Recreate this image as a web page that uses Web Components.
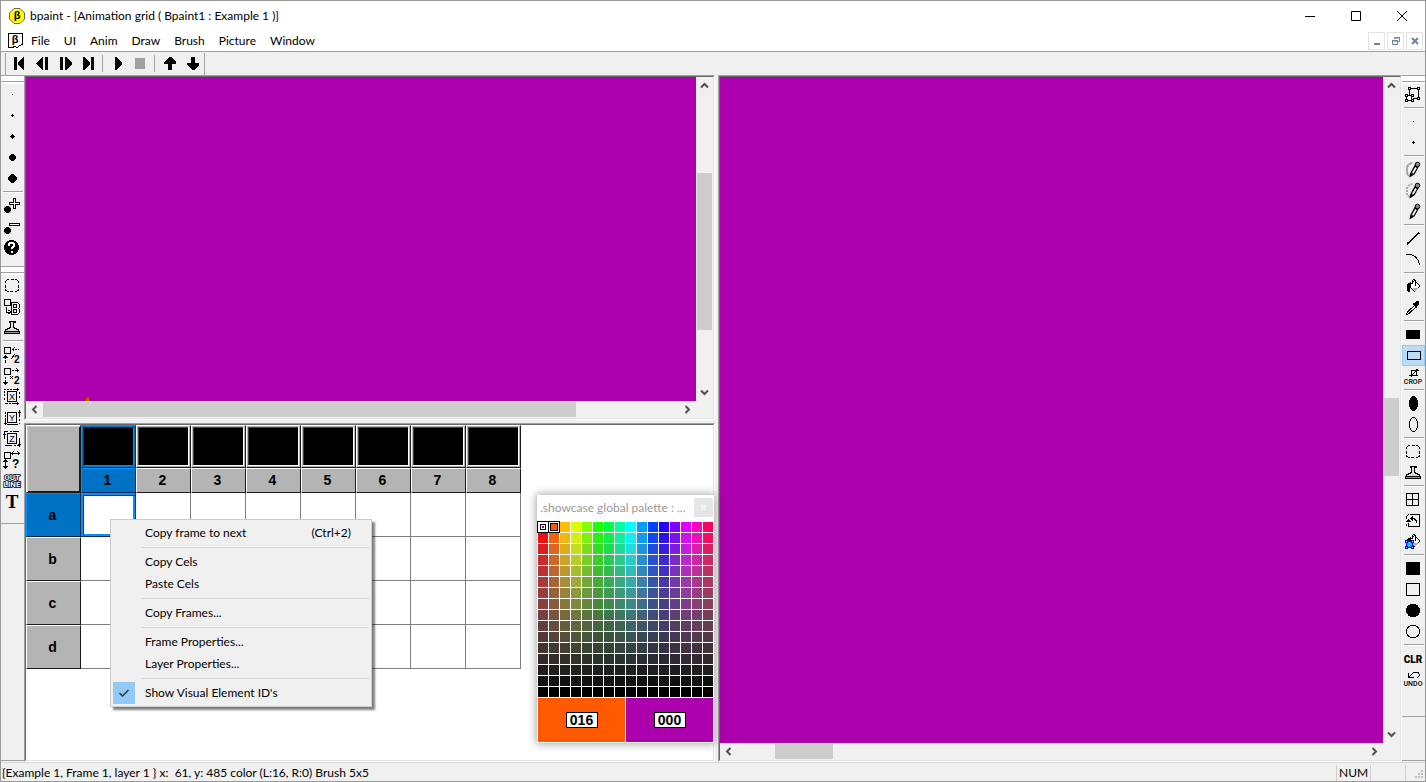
<!DOCTYPE html>
<html lang="en">
<head>
<meta charset="utf-8">
<title>bpaint</title>
<style>
html, body { margin: 0; height: 100%; }
body { font: 12px/16px Lato, "Noto Sans", sans-serif; color: #000; background: #f0f0f0; overflow: hidden; }
</style>
</head>
<body>
<bp-app></bp-app>
<script>
const BASE = `<style>
:host, *, *::before { box-sizing: border-box; }
button { font: inherit; color: inherit; background: none; border: 0; padding: 0; margin: 0; display: block; }
svg { display: block; }
</style>`;
function define(tag, html, setup) {
  const t = document.createElement('template');
  t.innerHTML = BASE + html;
  customElements.define(tag, class extends HTMLElement {
    constructor() { super(); this.attachShadow({ mode: 'open' }).append(t.content.cloneNode(true)); }
    connectedCallback() { if (setup && !this.ready) { this.ready = true; setup(this, this.shadowRoot); } }
  });
}

/* Icons, drawn on a 23 x 21 tile */
const S = 'fill="none" stroke="#000"';
const pencil = `<g shape-rendering="auto"><path d="M15.500 5.500L10.500 14.500" stroke="#000" stroke-width="4.500"/><path d="M7.500 18.500l.8-5 4 2z"/><path d="M14 8.500L10.800 14" stroke="#fff" stroke-width="1.800"/><circle cx="15.500" cy="5.500" r="2.300" fill="#888" stroke="#000"/></g>`;
const trail = `<path d="M10.500 4Q7 4 5 8v5q0 3 3 4" shape-rendering="auto" fill="none" stroke="#a8a8a8" stroke-width="2"`;
const bucket = `<path d="M8.500 8.500l4-4 5.500 5.500-5.500 5.500-4.500-4.500z" fill="#fff" stroke="#000"/><path d="M5 8l4-2 0 2.500-1.500 1.500 0 6-2.500-1z"/><path d="M10.500 7.500v-2.500l1-1.500h1l1 1.500v5" ${S}/><path d="M10 12l3 3 3.500-3.500z" fill="#aaa"/>`;
const ball = `<rect x="3" y="11" width="7" height="7" fill="#bbb"/><path d="M5 11h3v1h1v1h1v3h-1v1h-1v1h-3v-1h-1v-1h-1v-3h1v-1h1z"/>`;
const marquee = `<path d="M4.500 8V6.500L6.500 4.500H8M10 4.500h3M14 4.500h1.500l2 2V8M17.500 10v3M17.500 14v1l-2 1.500H14M12 16.500h-3M8 16.500H6.500l-2-1.500V14M4.500 13v-3" ${S}/>`;
const stamp = `<path d="M8 4.500h6v1h-1.500v5l5 2.500v1.500h-13v-1.500l5-2.500v-5H8z" fill="#ddd" stroke="#000"/><path d="M3.500 14.500h15v2h-15z" fill="#999" stroke="#000"/>`;
const box = `<rect x="3.500" y="3.500" width="6" height="6" ${S}/>`;
const tiny = (x, y, size, s) => `<text x="${x}" y="${y}" font-size="${size}" font-weight="700" font-family="Liberation Sans, sans-serif">${s}</text>`;
const axis = (s, extra) => `<rect x="6.500" y="5.500" width="9" height="10" ${S}/><text x="11" y="14" font-size="9" text-anchor="middle" font-family="Liberation Sans, sans-serif">${s}</text>${extra}`;
const ICONS = {
  dot1: `<rect x="11" y="10" width="1" height="1"/>`,
  dot2: `<path d="M11 9h1v1h1v1h-1v1h-1v-1h-1v-1h1z"/>`,
  dot3: `<path d="M11 8h1v1h1v1h1v1h-1v1h-1v1h-1v-1h-1v-1h-1v-1h1v-1h1z"/>`,
  dot4: `<path d="M10 7h3v1h1v1h1v3h-1v1h-1v1h-3v-1h-1v-1h-1v-3h1v-1h1z"/>`,
  dot5: `<path d="M10 6h3v1h1v1h1v1h1v3h-1v1h-1v1h-1v1h-3v-1h-1v-1h-1v-1h-1v-3h1v-1h1v-1h1z"/>`,
  bigger: ball + `<path d="M12.500 3.500h2v4h4v2h-4v4h-2v-4h-4v-2h4z" fill="#fff" stroke="#000"/>`,
  smaller: ball + `<rect x="8.500" y="7.500" width="10" height="2" fill="#fff" stroke="#000"/>`,
  help: `<circle cx="10.500" cy="10.500" r="7.500"/><path d="M8 9V7.500l1-1.500h3l1 1.500v1.500l-2.500 2v1M10.500 13.500v2" fill="none" stroke="#fff" stroke-width="2"/>`,
  marquee, stamp,
  brush: box + `<path d="M5.500 11v5h4M7.500 14l2.500 2-2.500 2" ${S}/><path d="M10.500 6.500h6l2 2v3l-1 1 1 1.500v2.500l-2 2h-6z" fill="#f0f0f0" stroke="#000"/><path d="M12.500 8.500h3v3h-3zM12.500 13.500h3v3h-3z" ${S}/>`,
  half: box + `<path d="M11 5.500h2M14 5.500h2M17 5.500h1M13.500 3.500l-2 2 2 2M4.500 12v3M4.500 16v3M2.500 14l2-2 2 2M10 15l4-5" ${S}/>` + tiny(13, 19, 10, '2'),
  dbl: box + `<path d="M11 5.500h2M14 5.500h4M15.500 3.500l2 2-2 2M4.500 12v2M4.500 15v4M2.500 17l2 2 2-2M9 11l3 3M12 11l-3 3" ${S}/>` + tiny(13, 19, 10, '2'),
  flipx: axis('X', `<path d="M3 3.500h2M6 3.500h2M9 3.500h2M12 3.500h6M16.500 2v3M3.500 5v2M3.500 8v2M3.500 12v2M4 17.500h3M8 17.500h2M11 17.500h7M16.500 16v3M18.500 6v2M18.500 10v2" ${S}/>`),
  flipy: axis('Y', `<path d="M4.500 5v2M4.500 8v2M4.500 11v7M3 16.500h3M18.500 3v7M17 5.500h3M18.500 12v2M18.500 16v1M6 17.500h11" ${S}/>`),
  flipz: axis('Z', `<path d="M3 3.500h4M9 3.500h2M12 3.500h6M3.500 4v7M2 6.500h3M18.500 10v9M17 16.500h3M4 17.500h7M13 17.500h2M16 17.500h2" ${S}/>`),
  free: box + `<path d="M11 4.500h7M12.500 2.500l-2 2 2 2M16.500 2.500l2 2-2 2M4.500 11v8M2.500 13l2-2 2 2M2.500 17l2 2 2-2" ${S}/>` + tiny(11, 19, 12, '?'),
  outline: `<g fill="#f4f4f4" stroke="#000" stroke-width="1.500" paint-order="stroke" shape-rendering="auto" text-anchor="middle" font-weight="700" font-size="8" font-family="Roboto, sans-serif"><text x="11" y="10">OUT</text><text x="11" y="17">LINE</text></g>`,
  text: `<text x="11" y="17" font-size="19" font-weight="700" text-anchor="middle" font-family="Liberation Serif, serif">T</text>`,
  transform: `<path d="M7.500 12v-7.500h9v10h-6" ${S}/><g fill="#fff" stroke="#000"><path d="M4.500 11.500h5v5h-5z"/><path d="M6.500 3.500h2v2h-2zM15.500 3.500h2v2h-2zM15.500 13.500h2v2h-2zM3.500 10.500h2v2h-2zM9.500 10.500h2v2h-2zM3.500 15.500h2v2h-2zM9.500 15.500h2v2h-2z"/></g>`,
  pen1: trail + '/>' + pencil,
  pen2: trail + ' stroke-dasharray="2 1"/>' + pencil,
  pen3: pencil,
  line: `<path d="M5 16L17.500 4.500" ${S} stroke-width="1.500"/>`,
  arc: `<path d="M4 5.500h4q8 1 9.500 10.500" ${S}/>`,
  bucket,
  dropper: `<path d="M13 8l-7.500 7-1 2.500 2.500-1 7.500-7" fill="#fff" stroke="#000"/><path d="M10 7l2-1 2-2h3v3l-2 2 0 3z"/>`,
  rectf: `<rect x="4" y="6" width="14" height="9"/>`,
  rect: `<rect x="5.500" y="6.500" width="13" height="8" ${S}/>`,
  crop: `<path d="M7 9.500h8.500M9.500 11V4.500h7M9.500 9.500l6-6M14.500 3v7" ${S}/><text x="11" y="18" font-size="7" text-anchor="middle" font-family="Roboto, sans-serif" font-weight="500">CROP</text>`,
  ovalf: `<ellipse cx="11.500" cy="10.500" rx="4.500" ry="7.500"/>`,
  oval: `<ellipse cx="11.500" cy="10.500" rx="4" ry="7" ${S}/>`,
  grid: `<path d="M4.500 4.500h12v12h-12zM10.500 4.500v12M4.500 10.500h12" ${S}/>`,
  rotate: `<path d="M8 4.500h9.500v12H6.500V13M4.500 9V6.500l2-2M10 8.500h2l2 2V13M4.500 14v2" ${S}/><path d="M11 6v5L8 8.500zM4 12h5l-2.500-3z"/>`,
  fillobj: bucket + `<path d="M4.500 10.500h6v6h-6z" fill="#2bd" stroke="#00f"/><path d="M3 9h3v3H3zM9 9h3v3H9zM3 15h3v3H3zM9 15h3v3H9z" fill="#00f"/><path d="M4 10h1v1H4zM10 10h1v1h-1zM4 16h1v1H4zM10 16h1v1h-1z" fill="#fff"/>`,
  sqf: `<rect x="4" y="4" width="14" height="13"/>`,
  sq: `<rect x="4.500" y="4.500" width="13" height="12" ${S}/>`,
  circf: `<path d="M8 4h6v1h2v2h1v1h1v5h-1v2h-1v1h-2v1H8v-1H6v-2H5v-1H4V8h1V6h1V5h2z"/>`,
  circ: `<circle cx="11" cy="10.500" r="6.500" ${S}/>`,
  clr: `<text x="11" y="15" font-size="10" font-weight="900" text-anchor="middle" font-family="Roboto, sans-serif">CLR</text>`,
  undo: `<path d="M6.500 4v4.500h5M7 8l4-4 3-1h2l1 2v2l-2 2" ${S}/><text x="11" y="17" font-size="7" text-anchor="middle" font-family="Roboto, sans-serif" font-weight="500">UNDO</text>`,
  first: `<path d="M6 4h3v13H6zM10 10l5-6h1v13h-1l-5-6z"/>`,
  prev: `<path d="M5 10l6-6h1v13h-1l-6-6zM14 4h3v13h-3z"/>`,
  next: `<path d="M6 4h3v13H6zM11 4h1l6 6v1l-6 6h-1z"/>`,
  last: `<path d="M6 4h1l6 6v1l-6 6H6zM14 4h3v13h-3z"/>`,
  play: `<path d="M9 4h1l6 6v1l-6 6H9z"/>`,
  stop: `<rect x="6" y="5" width="10" height="11" fill="#a0a0a0"/>`,
  up: `<path d="M11 4h2l5 5v2h-4v6h-4v-6H6V9z"/>`,
  down: `<path d="M10 4h4v6h4v2l-5 5h-2l-5-5v-2h4z"/>`,
};
define('bp-icon', `<style>:host { display: block; width: 23px; height: 21px; }</style><div></div>`, (el, root) => {
  root.querySelector('div').innerHTML = `<svg width="23" height="21" viewBox="0 0 23 21" shape-rendering="crispEdges" aria-hidden="true">${ICONS[el.getAttribute('name')]}</svg>`;
});

define('bp-tool', `<style>
:host { display: block; }
button { width: 23px; height: 21px; }
:host([active]) button { background: #bcdcf4; box-shadow: inset 0 0 0 1px #90c8f6; }
</style><button type="button"></button>`, (el, root) => {
  const n = el.getAttribute('name'), b = root.querySelector('button');
  b.setAttribute('aria-label', n);
  b.innerHTML = `<bp-icon name="${n}"></bp-icon>`;
});

define('bp-sep', `<style>
:host { display: block; height: 6px; padding: 2px 1px 0 2px; }
:host::before { content: ""; display: block; height: 2px; background: #a0a0a0; border-bottom: 1px solid #fff; }
:host([vertical]) { height: 17px; width: 6px; padding: 0 0 0 2px; }
:host([vertical])::before { height: 17px; width: 1px; border: 0; }
</style>`);

/* Docked vertical tool strip with a gripper on top */
define('bp-strip', `<style>
:host { display: block; border-top: 1px solid #a0a0a0; }
.grip { height: 8px; background: linear-gradient(#a0a0a0, #a0a0a0) 0 5px / 100% 1px no-repeat #fff; }
</style><div class="grip"></div><slot></slot>`, (el) => {
  el.innerHTML = el.getAttribute('tools').split(' ').map(t =>
    t === '|' ? '<bp-sep></bp-sep>' : `<bp-tool name="${t.replace('*', '')}"${t.endsWith('*') ? ' active' : ''}></bp-tool>`).join('');
});

define('bp-dock', `<style>
:host { display: flex; flex-direction: column; width: 23px; flex: none; background: #f0f0f0; }
.end { flex: 1; border: solid #a0a0a0; border-width: 1px 0; margin-bottom: 1px; }
</style><slot></slot><div class="end"></div>`);

define('bp-titlebar', `<style>
:host { display: flex; align-items: center; height: 30px; background: #fff; padding-left: 8px; }
h1 { font: inherit; margin: 0 0 0 5px; flex: 1; }
.win { width: 46px; height: 30px; display: grid; place-items: center; }
</style>
<svg width="16" height="16" viewBox="0 0 16 16"><path d="M5 .5h6l4.500 4.500v6l-4.500 4.500H5L.5 11V5z" fill="#ff0" stroke="#666"/><text x="8" y="11" font-size="11" font-weight="700" text-anchor="middle" font-family="Liberation Sans, sans-serif">β</text></svg>
<h1>bpaint - [Animation grid ( Bpaint1 : Example 1 )]</h1>
<button class="win" type="button" aria-label="Minimize"><svg width="12" height="12"><path d="M1 6.500h10" ${S}/></svg></button>
<button class="win" type="button" aria-label="Maximize"><svg width="12" height="12"><path d="M1.500 1.500h9v9h-9z" ${S}/></svg></button>
<button class="win" type="button" aria-label="Close"><svg width="12" height="12"><path d="M1 1l10 10M11 1L1 11" ${S}/></svg></button>`);

define('bp-menubar', `<style>
:host { display: flex; align-items: center; height: 20px; background: #fff; padding: 0 2px 0 7px; }
nav { display: flex; flex: 1; }
nav button { padding: 0 7px; height: 18px; line-height: 18px; }
.mdi { display: flex; gap: 2px; }
.mdi button { width: 17px; height: 18px; border: 1px solid #e3e3e3; display: grid; place-items: center; }
</style>
<svg width="16" height="16" viewBox="0 0 16 16"><path d="M.5.500h14v11l-3 1-2 2-3-1-2 1H.5z" fill="#fff" stroke="#000" shape-rendering="crispEdges"/><text x="7" y="10" font-size="11" font-weight="700" text-anchor="middle" font-family="Liberation Sans, sans-serif">β</text></svg>
<nav><button type="button">File</button><button type="button">UI</button><button type="button">Anim</button><button type="button">Draw</button><button type="button">Brush</button><button type="button">Picture</button><button type="button">Window</button></nav>
<div class="mdi">
<button type="button" aria-label="Minimize document"><svg width="10" height="10"><path d="M2 7h6v2H2z" fill="#728296"/></svg></button>
<button type="button" aria-label="Restore document"><svg width="10" height="10"><path d="M3.500 3V1.500h5v4H7M1.500 4.500h5v4h-5zM3 2h6M1 5h6" fill="none" stroke="#728296"/></svg></button>
<button type="button" aria-label="Close document"><svg width="10" height="10"><path d="M2 2l6 6M8 2L2 8" stroke="#728296" stroke-width="2"/></svg></button>
</div>`);

define('bp-toolbar', `<style>
:host { display: flex; height: 24px; border-top: 1px solid #a0a0a0; background: #f0f0f0; }
.bar { display: flex; align-items: flex-start; margin: 1px 0 0 4px; padding: 0 0 0 2px; border: solid #a0a0a0; border-width: 0 1px; }
bp-sep { margin-top: 2px; }
</style><div class="bar" role="toolbar"><bp-tool name="first"></bp-tool><bp-tool name="prev"></bp-tool><bp-tool name="next"></bp-tool><bp-tool name="last"></bp-tool><bp-sep vertical></bp-sep><bp-tool name="play"></bp-tool><bp-tool name="stop"></bp-tool><bp-sep vertical></bp-sep><bp-tool name="up"></bp-tool><bp-tool name="down"></bp-tool></div>`);

/* Scrollbar; the range attribute holds space before, thumb, space after */
define('bp-scroll', `<style>
:host { display: flex; background: #f0f0f0; min-width: 0; min-height: 0; }
:host([vertical]) { flex-direction: column; }
button { flex: none; width: 17px; height: 17px; display: grid; place-items: center; }
:host([vertical]) svg { transform: rotate(90deg); }
.thumb { background: #cdcdcd; margin: 1px 0; }
:host([vertical]) .thumb { margin: 0 1px; }
</style>
<button type="button" aria-label="Back"><svg width="9" height="9"><path d="M6.500 1L3 4.500 6.500 8" fill="none" stroke="#505050" stroke-width="2"/></svg></button>
<div></div><div class="thumb"></div><div></div>
<button type="button" aria-label="Forward"><svg width="9" height="9"><path d="M2.500 1L6 4.500 2.500 8" fill="none" stroke="#505050" stroke-width="2"/></svg></button>`, (el, root) => {
  const r = el.getAttribute('range').split(' ');
  root.querySelectorAll('div').forEach((d, i) => d.style.flex = r[i] + ' 0 0px');
});

define('bp-pane', `<style>
:host { display: grid; position: relative; min-width: 0; min-height: 0; border: 1px solid; border-color: #a0a0a0 #fff #fff #a0a0a0; }
.in { display: grid; min-width: 0; min-height: 0; border: 1px solid; border-color: #696969 #e3e3e3 #e3e3e3 #696969; }
</style><div class="in"><slot></slot></div>`);

define('bp-canvas', `<style>
:host { display: grid; background: #f0f0f0; min-width: 0; min-height: 0; }
.area { display: grid; grid-template: minmax(0, 1fr) 17px / minmax(0, 1fr) 17px; min-width: 0; min-height: 0; }
.paint { background: #ab00ab; position: relative; }
.paint svg { position: absolute; left: 60px; bottom: 0; display: none; }
:host([mark]) .paint svg { display: block; }
</style><div class="area"></div>`, (el, root) => {
  root.querySelector('.area').innerHTML = `<div class="paint"><svg width="3" height="3" shape-rendering="crispEdges"><path d="M0 0h3v3H0z" fill="#d23a30"/><path d="M0 0h1v1H0zM2 0h1v1H2zM0 2h1v1H0zM2 2h1v1H2z" fill="#ff7a00"/></svg></div><bp-scroll vertical range="${el.getAttribute('v')}"></bp-scroll><bp-scroll range="${el.getAttribute('h')}"></bp-scroll>`;
});

define('bp-timeline', `<style>
:host { display: block; }
table { border-collapse: separate; border-spacing: 0; table-layout: fixed; width: 495px; font: bold 14px/14px "Liberation Sans", Arial, sans-serif; }
th, td { padding: 0; text-align: center; vertical-align: middle; width: 55px; }
th { background: #b4b4b4; border: 1px solid; border-color: #fff #1a1a1a #1a1a1a #fff; padding: 0 2px 0 0; }
.thumb th { height: 43px; background: #000; box-shadow: inset -1px -1px #b4b4b4, inset 1px 1px #b4b4b4, inset -2px -2px #fff, inset 2px 2px #404040; }
.num th { height: 25px; padding: 0 2px 2px 0; }
tbody th, tbody td { height: 44px; }
td { border: solid #808080; border-width: 0 1px 1px 0; background: #fff; }
.thumb th.corner { background: #b4b4b4; box-shadow: inset 1px 1px #d0d0d0, inset -1px -1px #1a1a1a; }
th.on { background: #0072c6; border-color: #0090ff #002850 #002850 #0090ff; }
.thumb th.on { background: #000; box-shadow: inset 1px 1px #0072c6, inset -1px -1px #0072c6, inset 2px 2px #002850, inset -2px -2px #0090ff; }
td.on { box-shadow: inset 2px 2px #0090ff, inset 3px 3px #002850, inset -2px -2px #0090ff; border-color: #002850; }
</style><table><thead><tr class="thumb"></tr><tr class="num"></tr></thead><tbody></tbody></table>`, (el, root) => {
  const n = [1, 2, 3, 4, 5, 6, 7, 8], on = i => i === 1 ? ' class="on"' : '';
  root.querySelector('.thumb').innerHTML = '<th rowspan="2" class="corner"></th>' + n.map(i => `<th${on(i)}></th>`).join('');
  root.querySelector('.num').innerHTML = n.map(i => `<th scope="col"${on(i)}>${i}</th>`).join('');
  root.querySelector('tbody').innerHTML = ['a', 'b', 'c', 'd'].map((r, k) =>
    `<tr><th scope="row"${on(k + 1)}>${r}</th>` + n.map(i => `<td${k ? '' : on(i)}></td>`).join('') + '</tr>').join('');
});

define('bp-menu-item', `<style>
:host { display: block; }
button { display: flex; width: 100%; height: 22px; align-items: center; text-align: left; padding-right: 18px; }
.check { width: 22px; height: 22px; margin-right: 10px; display: grid; place-items: center; }
.check svg { display: none; }
:host([checked]) .check { background: #91c9f7; }
:host([checked]) .check svg { display: block; }
.label { flex: 1; }
</style><button type="button" role="menuitem"><span class="check"><svg width="12" height="12"><path d="M1.500 6l3 3 6-6" fill="none" stroke="#333" stroke-width="1.500"/></svg></span><span class="label"><slot></slot></span><slot name="key"></slot></button>`);

define('bp-menu', `<style>
:host { display: block; position: absolute; left: 85px; top: 95px; width: 262px; padding: 2px; border: 1px solid #ccc; background: #f0f0f0; box-shadow: 3px 3px 2px rgba(0,0,0,.5); z-index: 2; }
hr { border: 0; height: 1px; background: #d7d7d7; margin: 3px 0 3px 28px; }
</style><div role="menu">
<bp-menu-item>Copy frame to next<span slot="key">(Ctrl+2)</span></bp-menu-item><hr>
<bp-menu-item>Copy Cels</bp-menu-item><bp-menu-item>Paste Cels</bp-menu-item><hr>
<bp-menu-item>Copy Frames...</bp-menu-item><hr>
<bp-menu-item>Frame Properties...</bp-menu-item><bp-menu-item>Layer Properties...</bp-menu-item><hr>
<bp-menu-item checked>Show Visual Element ID's</bp-menu-item></div>`);

define('bp-palette', `<style>
:host { display: block; position: absolute; right: 0; bottom: 18px; width: 177px; padding: 1px; background: #fff; box-shadow: 0 0 8px 1px rgba(0,0,0,.35); z-index: 1; }
header { display: flex; height: 26px; justify-content: space-between; padding: 2px 0 4px 2px; color: #999; line-height: 20px; white-space: nowrap; }
header button { width: 19px; height: 19px; background: #e5e5e5; display: grid; place-items: center; }
.sw { display: grid; grid-template-columns: repeat(16, 10px); grid-auto-rows: 10px; gap: 1px; }
.sw .r { box-shadow: 0 0 0 1px #000; background: #fff; z-index: 1; display: grid; place-items: center; }
.sw .r i { width: 6px; height: 6px; border: 1px solid #000; background: #ab00ab; box-shadow: inset 0 0 0 1px #fff; }
.sw .l { box-shadow: 0 0 0 1px #000; border: 1px solid #fff; z-index: 1; }
.sw .l i { display: block; height: 8px; border: 1px solid #000; background: #ff5a00; }
.cur { display: grid; grid-template-columns: 1fr 1fr; gap: 1px; margin-top: 1px; height: 44px; font: bold 14px/14px "Liberation Sans", Arial, sans-serif; }
.cur > div { display: grid; place-items: center; }
.cur span { width: 32px; height: 16px; border: 1px solid #000; background: #fff; text-align: center; }
</style><header><span>.showcase global palette : ...</span><button type="button" aria-label="Close palette"><svg width="7" height="7"><path d="M1 1l5 5M6 1L1 6" stroke="#f4f4f4" stroke-width="2"/></svg></button></header>
<div class="sw"></div><div class="cur"><div style="background:#ff5a00"><span>016</span></div><div style="background:#ab00ab"><span>000</span></div></div>`, (el, root) => {
  const sw = root.querySelector('.sw');
  for (let r = 0; r < 16; r++) for (let c = 0; c < 16; c++) {
    const b = document.createElement('button'), v = 1 - r / 15, h = c * 22.5;
    const f = n => { const k = (n + h / 60) % 6; return Math.round(255 * (v - v * v * Math.max(0, Math.min(k, 4 - k, 1)))); };
    b.type = 'button';
    b.setAttribute('aria-label', 'Color ' + (c * 16 + r));
    if (!r && c < 2) { b.className = c ? 'l' : 'r'; b.innerHTML = '<i></i>'; }
    else b.style.background = `rgb(${f(5)},${f(3)},${f(1)})`;
    sw.append(b);
  }
});

define('bp-status', `<style>
:host { display: flex; align-items: center; height: 19px; background: #f0f0f0; border-top: 1px solid #d7d7d7; padding: 2px 1px 0 1px; }
p { margin: 0; flex: 1; white-space: pre; }
.ind { border: solid #d0d0d0; border-width: 0 1px; width: 35px; padding-left: 2px; }
.blank { width: 35px; height: 16px; border-right: 1px solid #d0d0d0; }
svg { margin-left: 9px; align-self: flex-end; }
</style><p>{Example 1, Frame 1, layer 1 } x:  61, y: 485 color (L:16, R:0) Brush 5x5</p><span class="ind">NUM</span><span class="blank"></span><svg width="9" height="11"><path d="M6 0h2v2H6zM3 3h2v2H3zM6 3h2v2H6zM0 6h2v2H0zM3 6h2v2H3zM6 6h2v2H6z" fill="#bfbfbf"/></svg>`);

define('bp-app', `<style>
:host { display: flex; flex-direction: column; height: 100vh; border: 1px solid #999; background: #f0f0f0; }
.work { flex: 1; display: flex; min-height: 0; }
.panes { flex: 1; display: grid; grid-template-columns: 691fr 684fr; column-gap: 3px; min-width: 0; }
.left { display: grid; grid-template-rows: 345fr 339fr; row-gap: 3px; min-width: 0; min-height: 0; }
.sheet { background: #fff; overflow: hidden; }
</style>
<bp-titlebar></bp-titlebar><bp-menubar></bp-menubar><bp-toolbar></bp-toolbar>
<div class="work">
<bp-dock><bp-strip style="padding-bottom:8px" tools="dot1 dot2 dot3 dot4 dot5 | bigger smaller help"></bp-strip><bp-strip style="padding-bottom:11px" tools="marquee brush stamp | half dbl flipx flipy flipz free outline text"></bp-strip></bp-dock>
<div class="panes">
<div class="left">
<bp-pane><bp-canvas mark v="79 157 54" h="0 533 103"></bp-canvas></bp-pane>
<bp-pane><div class="sheet"><bp-timeline></bp-timeline></div><bp-menu></bp-menu><bp-palette></bp-palette></bp-pane>
</div>
<bp-pane><bp-canvas v="304 78 250" h="38 58 533"></bp-canvas></bp-pane>
</div>
<bp-dock><bp-strip style="padding-bottom:26px" tools="transform | dot1 dot2 | pen1 pen2 pen3 | line arc | bucket dropper | rectf rect* crop | ovalf oval | marquee stamp | grid rotate fillobj | sqf sq circf circ | clr undo"></bp-strip></bp-dock>
</div>
<bp-status></bp-status>`);
</script>
</body>
</html>
